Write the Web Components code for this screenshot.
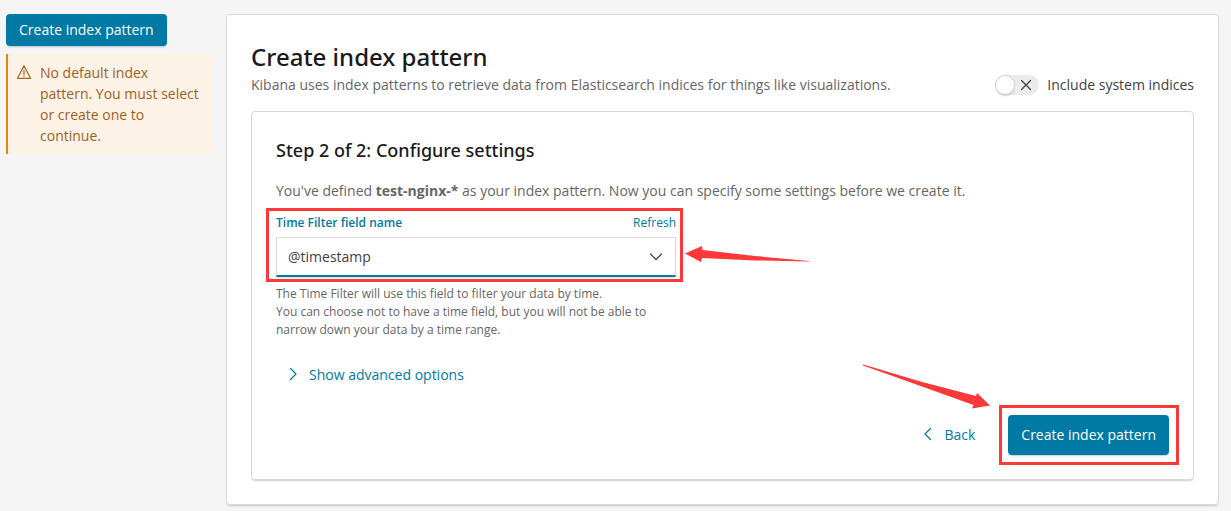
<!DOCTYPE html>
<html lang="en">
<head>
<meta charset="utf-8">
<title>Create index pattern</title>
<style>
  body { margin: 0; background: #f5f5f5; color: #1a1a1a; font: 14px/21px "Open Sans", "Noto Sans", sans-serif; }
</style>
</head>
<body>
<index-pattern-page></index-pattern-page>
<script>
const define = (name, html, setup) => customElements.define(name, class extends HTMLElement {
  constructor() {
    super();
    const template = document.createElement('template');
    template.innerHTML = html;
    this.attachShadow({ mode: 'open' }).append(template.content.cloneNode(true));
  }
  connectedCallback() { if (setup) setup(this, this.shadowRoot); }
});

define('ui-icon', `
  <style>
    :host { display: block; width: 16px; height: 16px; flex: none; }
    svg { display: block; width: 16px; height: 16px; fill: none; stroke: currentColor; stroke-width: 1.2; stroke-linecap: round; stroke-linejoin: round; }
  </style>
  <svg viewBox="0 0 16 16" aria-hidden="true"><path></path></svg>`,
  (host, root) => {
    const shapes = {
      right: 'M5.5 2.5L11 8L5.5 13.5',
      left: 'M10.5 2.5L5 8L10.5 13.5',
      down: 'M2.5 5L8 10.5L13.5 5',
      cross: 'M3.5 3.5L12.5 12.5M12.5 3.5L3.5 12.5',
      alert: 'M8 1.7L14.5 14.3H1.5ZM8 6V10.4M8 11.8V12.3'
    };
    root.querySelector('path').setAttribute('d', shapes[host.getAttribute('name')]);
  });

define('ui-button', `
  <style>
    :host { display: block; --height: 40px; }
    :host([small]) { --height: 32px; }
    button { display: block; height: var(--height); padding: 0 13px 2px; border: 0; border-radius: 4px; background: #0079a5; color: #fff;
      font: inherit; white-space: nowrap; cursor: pointer; box-shadow: 0 2px 2px -1px rgba(0, 80, 110, .3); }
  </style>
  <button type="button"><slot></slot></button>`);

define('ui-link-button', `
  <style>
    :host { display: block; }
    button { display: flex; align-items: center; gap: 8px; height: 40px; padding: 0 8px 2px 9px; border: 0; background: none; color: #0079a5; font: inherit; cursor: pointer; }
  </style>
  <button type="button"><slot name="icon"></slot><slot></slot></button>`);

define('ui-callout', `
  <style>
    :host { display: flex; gap: 8px; padding: 8px 12px 8px 8px; border-left: 2px solid #e5830e; background: #fcf3e6; color: #9e611e; }
    ui-icon { margin-top: 2px; }
    p { margin: 0; }
  </style>
  <ui-icon name="alert"></ui-icon><p><slot></slot></p>`);

define('ui-panel', `
  <style>
    :host { display: block; padding: 24px; border: 1px solid #d9d9d9; border-radius: 4px; background: #fff; box-shadow: 0 2px 2px -1px rgba(0, 0, 0, .2); }
  </style>
  <slot></slot>`);

define('ui-switch', `
  <style>
    :host { display: block; color: #3f3f3f; }
    label { display: flex; align-items: center; gap: 8px; white-space: nowrap; cursor: pointer; }
    .track { display: grid; grid-template-columns: 20px 24px; align-items: center; width: 44px; height: 20px; border-radius: 10px; background: #ebebeb; }
    input { appearance: none; width: 20px; height: 20px; margin: 0; border: 1px solid #d0d0d0; border-radius: 50%; background: #fff; box-shadow: 0 2px 2px -1px rgba(0, 0, 0, .2); }
    ui-icon { margin-left: 3px; }
  </style>
  <label><span class="track"><input type="checkbox" role="switch"><ui-icon name="cross"></ui-icon></span><slot></slot></label>`);

define('mark-frame', `
  <style>
    :host { display: block; position: relative; }
    .frame { position: absolute; inset: -6px -7px -5px -10px; border: 3px solid #fc3838; pointer-events: none; }
    :host([for="submit"]) .frame { inset: -10px -10px -10px -9px; }
    svg { position: absolute; fill: #fc3838; pointer-events: none; display: none; }
    :host([for="field"]) .west { display: block; left: calc(100% + 9px); top: 31px; }
    :host([for="submit"]) .east { display: block; right: calc(100% + 18px); bottom: 45px; }
  </style>
  <slot></slot>
  <div class="frame"></div>
  <svg class="west" width="124" height="18" viewBox="0 0 124 18" aria-hidden="true"><path d="M0 8.5L17 1L17.5 5L70 11L124 16V16.6L70 15.4L17 13L16 17Z"/></svg>
  <svg class="east" width="128" height="46" viewBox="0 0 128 46" aria-hidden="true"><path d="M1 0.5L3 1L60 18L114 32L115 29L128 41.5L110 44.5L111.5 41L60 22.5L1 1.5Z"/></svg>`);

define('time-field', `
  <style>
    :host { display: block; max-width: 400px; color: #666; font-size: 12px; line-height: 18px; }
    .head { display: flex; justify-content: space-between; padding-bottom: 5px; color: #0079a5; }
    label { font-weight: 600; }
    a { color: inherit; text-decoration: none; }
    .control { display: grid; align-items: center; color: #3f3f3f; }
    .control > * { grid-area: 1 / 1; }
    .control ui-icon { justify-self: end; margin-right: 12px; pointer-events: none; }
    select { appearance: none; width: 100%; height: 40px; padding: 0 36px 0 11px; border: 1px solid #d9d9d9; border-bottom: 2px solid #0079a5; border-radius: 0;
      background: #fff; color: inherit; font: inherit; font-size: 14px; box-shadow: 0 2px 2px -1px rgba(0, 0, 0, .15); }
    p { margin: 8px 0 0; }
  </style>
  <mark-frame for="field">
    <div class="head"><label for="field">Time Filter field name</label><a href="#refresh">Refresh</a></div>
    <div class="control"><select id="field"><option>@timestamp</option></select><ui-icon name="down"></ui-icon></div>
  </mark-frame>
  <p>The Time Filter will use this field to filter your data by time.<br>You can choose not to have a time field, but you will not be able to narrow down your data by a time range.</p>`);

define('step-settings', `
  <style>
    :host { display: block; }
    h2 { margin: 0 0 16px; font: 500 18px/28px "Noto Sans", sans-serif; }
    p { margin: 0 0 13px; color: #666; }
    strong { font-weight: 700; }
    .advanced { display: flex; margin: 16px 0 20px; }
    .actions { display: flex; justify-content: flex-end; gap: 25px; }
  </style>
  <ui-panel>
    <h2>Step 2 of 2: Configure settings</h2>
    <p>You've defined <strong>test-nginx-*</strong> as your index pattern. Now you can specify some settings before we create it.</p>
    <time-field></time-field>
    <div class="advanced"><ui-link-button><ui-icon slot="icon" name="right"></ui-icon>Show advanced options</ui-link-button></div>
    <div class="actions">
      <ui-link-button><ui-icon slot="icon" name="left"></ui-icon>Back</ui-link-button>
      <mark-frame for="submit"><ui-button>Create index pattern</ui-button></mark-frame>
    </div>
  </ui-panel>`);

define('index-pattern-page', `
  <style>
    :host { display: grid; grid-template-columns: 206px minmax(0, 1fr); gap: 14px; align-items: start; padding: 14px 12px 6px 6px; }
    aside { display: grid; gap: 8px; }
    aside ui-button { justify-self: start; }
    header { display: flex; justify-content: space-between; align-items: flex-end; gap: 24px; margin-bottom: 16px; }
    h1 { margin: 0; font: 500 24px/35px "Noto Sans", sans-serif; }
    p { margin: 0; color: #666; }
  </style>
  <aside>
    <ui-button small>Create index pattern</ui-button>
    <ui-callout>No default index pattern. You must select or create one to continue.</ui-callout>
  </aside>
  <main>
    <ui-panel>
      <header>
        <div><h1>Create index pattern</h1><p>Kibana uses index patterns to retrieve data from Elasticsearch indices for things like visualizations.</p></div>
        <ui-switch>Include system indices</ui-switch>
      </header>
      <step-settings></step-settings>
    </ui-panel>
  </main>`);
</script>
</body>
</html>
